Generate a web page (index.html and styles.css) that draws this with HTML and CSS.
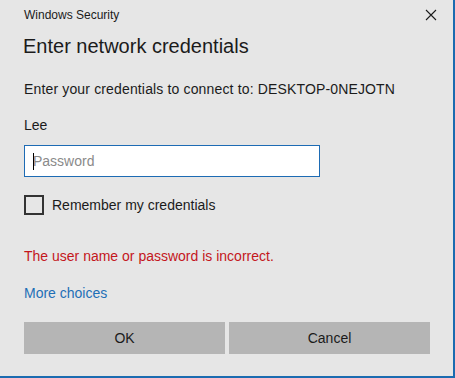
FILE: index.html
```html
<!DOCTYPE html>
<html lang="en">
<head>
  <meta charset="UTF-8">
  <title>Windows Security</title>
  <link rel="stylesheet" href="styles.css">
</head>
<body>

  <!-- Credential dialog -->
  <div class="dialog">
    <div class="titlebar">
      <span class="app-name">Windows Security</span>
      <button class="close" aria-label="Close">
        <svg width="12" height="12" viewBox="0 0 12 12">
          <path d="M1 1 L11 11 M11 1 L1 11" stroke="#1b1b1b" stroke-width="1.1" fill="none"/>
        </svg>
      </button>
    </div>

    <h1 class="heading">Enter network credentials</h1>
    <p class="prompt">Enter your credentials to connect to: DESKTOP-0NEJOTN</p>
    <p class="user">Lee</p>

    <div class="field">
      <span class="caret"></span>
      <input type="password" placeholder="Password">
    </div>

    <label class="remember">
      <span class="box"></span>
      <span>Remember my credentials</span>
    </label>

    <p class="error">The user name or password is incorrect.</p>
    <a class="more" href="#">More choices</a>

    <div class="actions">
      <button>OK</button>
      <button>Cancel</button>
    </div>
  </div>

</body>
</html>
```

FILE: styles.css
```css
body {
  margin: 0;
  padding: 0;
  font-family: "Liberation Sans", Arial, sans-serif;
  color: #1b1b1b;
}
.dialog {
  width: 455px;
  height: 378px;
  box-sizing: border-box;
  background-color: #e6e6e6;
  border-right: 2px solid #1b6bb0;
  border-bottom: 2px solid #1b6bb0;
  padding: 0 23px 0 24px;
  display: flex;
  flex-direction: column;
}
.titlebar {
  display: flex;
  justify-content: space-between;
  align-items: center;
  height: 30px;
}
.app-name {
  font-size: 12px;
}
.close {
  background: none;
  border: none;
  padding: 0;
  margin-right: -7px;
  width: 12px;
  height: 12px;
  display: flex;
}
.heading {
  font-size: 20px;
  font-weight: normal;
  margin: 3px 0 0 -1px;
  line-height: 27px;
}
.prompt {
  font-size: 14px;
  letter-spacing: 0.15px;
  margin: 20px 0 0;
  line-height: 18px;
}
.user {
  font-size: 14px;
  margin: 18px 0 0;
  line-height: 18px;
}
.field {
  position: relative;
  margin-top: 11px;
  width: 296px;
  height: 32px;
  box-sizing: border-box;
  border: 1px solid #1d6bb4;
  background: #fff;
}
.field input {
  width: 100%;
  height: 100%;
  box-sizing: border-box;
  border: none;
  outline: none;
  padding: 0 8px;
  font-family: inherit;
  font-size: 14px;
  background: transparent;
}
.field input::placeholder {
  color: #8a8a8a;
}
.caret {
  position: absolute;
  left: 8px;
  top: 7px;
  width: 1px;
  height: 17px;
  background: #000;
}
.remember {
  display: flex;
  align-items: center;
  margin-top: 18px;
  font-size: 14px;
}
.box {
  width: 20px;
  height: 20px;
  box-sizing: border-box;
  border: 2px solid #333;
  margin-right: 8px;
}
.error {
  font-size: 14px;
  color: #c4161c;
  margin: 32px 0 0;
  line-height: 18px;
}
.more {
  font-size: 14px;
  color: #1e6fb6;
  text-decoration: none;
  margin-top: 19px;
  line-height: 18px;
}
.actions {
  display: flex;
  gap: 4px;
  margin-top: 20px;
}
.actions button {
  flex: 1;
  height: 32px;
  border: none;
  background-color: #b5b5b5;
  font-family: inherit;
  font-size: 14px;
  color: #1b1b1b;
}
```
